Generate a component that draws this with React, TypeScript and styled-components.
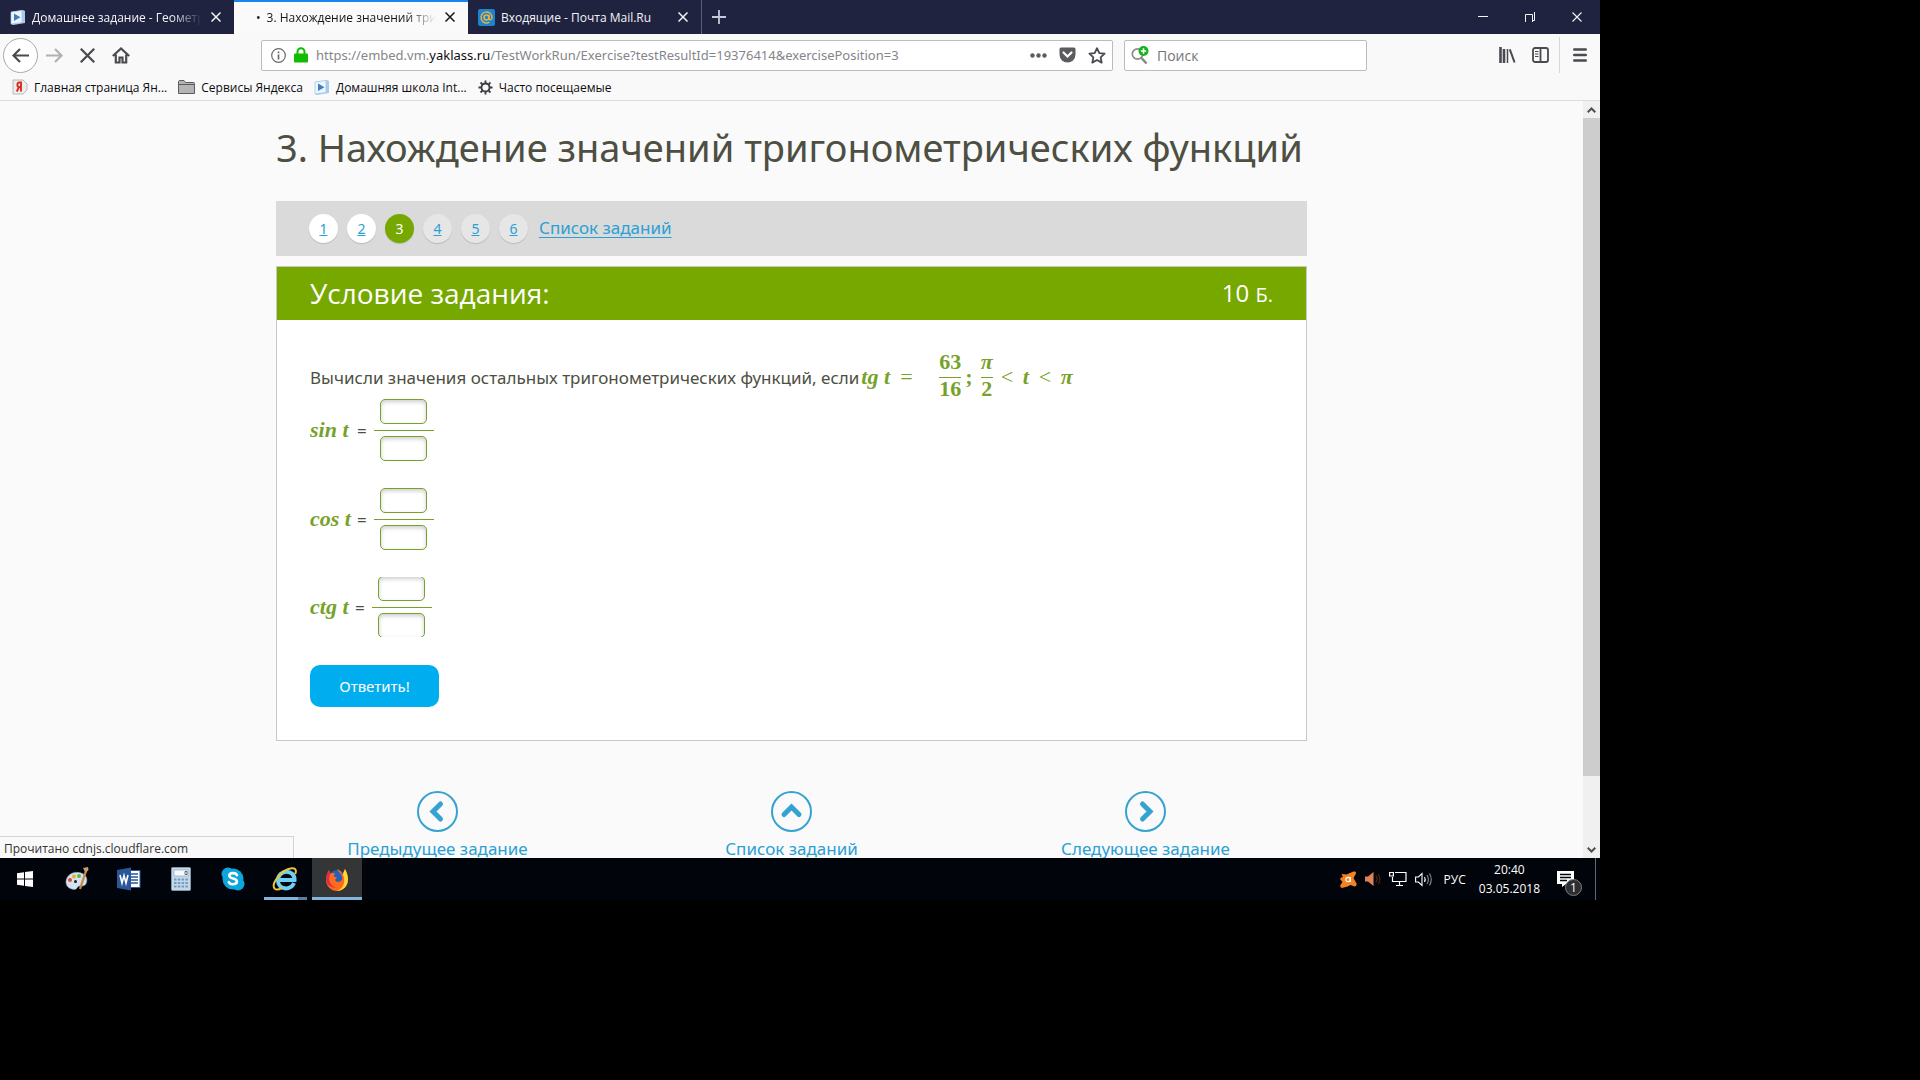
import React from "react";
import styled, { createGlobalStyle, css } from "styled-components";

const UI = `"Open Sans", "Noto Sans", sans-serif`;
const PAGE = `"Noto Sans", "Open Sans", sans-serif`;
const MATH = `"Liberation Serif", serif`;

const GlobalStyle = createGlobalStyle`
  * { box-sizing: border-box; }
  body { margin: 0; background: #000; font-family: ${UI}; }
  button { border: 0; padding: 0; background: none; color: inherit; font: inherit; cursor: pointer; }
  svg { display: block; flex: none; }
  h1, h2, p { margin: 0; font-weight: 400; }
`;

/* ---------- desktop ---------- */

const Desktop = styled.div`
  display: flex;
  flex-direction: column;
  width: calc(100% * 5 / 6);
  height: calc(100vh * 5 / 6);
  overflow: hidden;
`;

const BrowserWindow = styled.div`
  position: relative;
  display: flex;
  flex-direction: column;
  flex: 1;
  min-height: 0;
  background: #fafafa;
`;

/* ---------- tab strip ---------- */

const TabStrip = styled.div`
  display: flex;
  height: 34px;
  background: #20233f;
  color: #f4f4f8;
`;

const Tab = styled.div<{ $active?: boolean; $last?: boolean }>`
  display: flex;
  align-items: center;
  gap: 6px;
  width: 234px;
  padding: 0 10px;
  font-size: 12px;
  ${(p) =>
    p.$active &&
    css`
      background: #fafafa;
      color: #15151a;
      box-shadow: inset 0 2px #1784f0;
      padding-left: 22px;
    `}
  ${(p) => p.$last && "border-right: 1px solid #5d5f75;"}
`;

const TabTitle = styled.span<{ $fade?: boolean }>`
  flex: 1;
  overflow: hidden;
  white-space: nowrap;
  ${(p) => p.$fade && "mask-image: linear-gradient(to right, #000 82%, transparent 100%);"}
`;

const TabClose = styled.button`
  display: grid;
  place-items: center;
  width: 16px;
  height: 20px;
`;

const NewTab = styled.button`
  display: grid;
  place-items: center;
  width: 34px;
  color: #c8c9d6;
`;

const WindowControls = styled.div`
  display: flex;
  margin-left: auto;
`;

const WindowButton = styled.button`
  display: grid;
  place-items: center;
  width: 47px;
  height: 34px;
`;

/* ---------- toolbar ---------- */

const Toolbar = styled.div`
  display: flex;
  align-items: center;
  height: 42px;
  padding: 0 4px 0 3px;
  background: #f9f9fa;
  color: #4a4a4f;
`;

const ToolButton = styled.button<{ $round?: boolean; $dim?: boolean }>`
  display: grid;
  place-items: center;
  width: 33px;
  height: 36px;
  ${(p) =>
    p.$round &&
    css`
      width: 35px;
      height: 35px;
      border: 1px solid #a9a9ad;
      border-radius: 50%;
      background: #fff;
    `}
  ${(p) => p.$dim && "color: #b1b1b3;"}
`;

const Field = styled.div<{ $grow?: boolean }>`
  display: flex;
  align-items: center;
  gap: 8px;
  height: 31px;
  border: 1px solid #bcbcbf;
  border-radius: 2px;
  background: #fff;
  ${(p) =>
    p.$grow
      ? css`
          flex: 1;
          margin-left: 124px;
          padding: 0 6px 0 9px;
        `
      : css`
          width: 243px;
          margin: 0 124px 0 11px;
          padding: 0 6px;
        `}
`;

const Address = styled.div`
  flex: 1;
  overflow: hidden;
  white-space: nowrap;
  font-family: ${PAGE};
  font-size: 13px;
  color: #85858a;
  outline: none;
  b {
    font-weight: 400;
    color: #0c0c0d;
  }
`;

const FieldIcons = styled.div`
  display: flex;
  align-items: center;
  gap: 12px;
`;

const SearchInput = styled.input`
  flex: 1;
  min-width: 0;
  border: 0;
  padding: 0;
  outline: none;
  background: none;
  font: 14px ${UI};
  color: #333;
  &::placeholder {
    color: #757578;
    opacity: 1;
  }
`;

const MenuSlot = styled.div`
  display: flex;
  align-items: center;
  height: 36px;
  margin-left: 2px;
  padding-left: 3px;
  border-left: 1px solid #d7d7db;
`;

const Bookmarks = styled.nav`
  display: flex;
  align-items: center;
  gap: 11px;
  height: 25px;
  padding: 0 12px 2px;
  border-bottom: 1px solid #dcdcde;
  background: #f9f9fa;
`;

const Bookmark = styled.a`
  display: flex;
  align-items: center;
  gap: 6px;
  font-size: 12px;
  color: #0c0c0d;
  text-decoration: none;
  white-space: nowrap;
`;

/* ---------- page viewport ---------- */

const Viewport = styled.div`
  display: flex;
  flex: 1;
  min-height: 0;
`;

const PageArea = styled.main`
  flex: 1;
  min-width: 0;
  overflow: hidden;
  padding: 0 276px;
  font-family: ${PAGE};
`;

const Scrollbar = styled.div`
  display: flex;
  flex-direction: column;
  width: 17px;
  background: #f0f0f0;
  color: #505050;
`;

const ScrollArrow = styled.button`
  display: grid;
  place-items: center;
  height: 17px;
`;

const Track = styled.div`
  flex: 1;
`;

const Thumb = styled.div`
  height: 91%;
  background: #cdcdcd;
`;

const Title = styled.h1`
  padding: 20px 0 28px;
  font-size: 38px;
  line-height: 52px;
  color: #4d4f42;
  white-space: nowrap;
`;

const Steps = styled.nav`
  display: flex;
  align-items: center;
  gap: 9px;
  height: 55px;
  padding: 0 33px;
  background: #dadada;
`;

const Step = styled.a<{ $state: "done" | "current" | "next" }>`
  display: grid;
  place-items: center;
  width: 29px;
  height: 29px;
  border-radius: 50%;
  box-shadow: 0 1px 1px rgba(0, 0, 0, 0.15);
  font-size: 14px;
  color: ${(p) => (p.$state === "current" ? "#fff" : "#2ba0d4")};
  background: ${(p) => ({ done: "#fff", current: "#76a800", next: "#e6e6e6" })[p.$state]};
  text-decoration: ${(p) => (p.$state === "current" ? "none" : "underline")};
`;

const ListLink = styled.a`
  margin-left: 2px;
  font-size: 17px;
  line-height: 24px;
  padding-bottom: 2px;
  color: #2ba0d4;
  text-underline-offset: 3px;
`;

const Card = styled.section`
  margin-top: 10px;
  border: 1px solid #c8c8c8;
  background: #fff;
`;

const CardHeader = styled.header`
  display: flex;
  align-items: center;
  justify-content: space-between;
  height: 53px;
  padding: 0 33px 2px;
  background: #76a800;
  color: #fff;
  font-family: ${UI};
`;

const CardTitle = styled.h2`
  font-size: 28px;
`;

const Points = styled.span`
  font-size: 24px;
  small {
    font-size: 20px;
  }
`;

const CardBody = styled.form`
  padding: 35px 33px 33px;
  font-size: 17px;
  color: #4d4f42;
`;

const Question = styled.p`
  display: flex;
  align-items: center;
  height: 44px;
  white-space: nowrap;
`;

const MathText = styled.span<{ $upright?: boolean; $width?: number }>`
  min-width: ${(p) => p.$width ?? 0}px;
  font-family: ${MATH};
  font-size: 22px;
  line-height: 22px;
  font-weight: 700;
  font-style: ${(p) => (p.$upright ? "normal" : "italic")};
  color: #76a22a;
`;

const Relation = styled(MathText)`
  width: 14px;
  font-style: normal;
  font-weight: 400;
`;

const Formula = styled.span`
  display: flex;
  align-items: center;
  gap: 8px;
  margin-left: 2px;
`;

const Term = styled.span`
  display: flex;
  align-items: center;
  gap: 4px;
  margin-left: 17px;
`;

const Quotient = styled.span`
  display: flex;
  flex-direction: column;
  align-items: center;
  padding-bottom: 3px;
  & > :first-child {
    padding-bottom: 4px;
    border-bottom: 1px solid #76a22a;
  }
`;

const AnswerRow = styled.div<{ $clip?: boolean }>`
  display: flex;
  align-items: center;
  gap: 5px;
  height: ${(p) => (p.$clip ? 60 : 62)}px;
  margin-bottom: ${(p) => (p.$clip ? 28 : 27)}px;
  overflow: hidden;
`;

const AnswerFraction = styled.span`
  display: flex;
  flex: none;
  flex-direction: column;
  align-items: center;
  width: 60px;
  margin-left: 2px;
`;

const Bar = styled.span`
  width: 100%;
  height: 1px;
  margin: 6px 0 5px;
  background: #76a22a;
`;

const AnswerInput = styled.input`
  width: 47px;
  height: 25px;
  border: 1px solid #76a22a;
  border-radius: 5px;
  background: #fff;
  box-shadow: inset 0 2px 4px rgba(0, 0, 0, 0.2);
  text-align: center;
  outline: none;
`;

const Submit = styled.button`
  display: block;
  width: 129px;
  height: 42px;
  border-radius: 10px;
  background: #00aeef;
  color: #fff;
  font-size: 15px;
`;

const Pager = styled.nav`
  display: grid;
  grid-template-columns: repeat(3, 1fr);
  gap: 31px;
  margin-top: 50px;
`;

const PagerLink = styled.a`
  display: flex;
  flex-direction: column;
  align-items: center;
  gap: 5px;
  font-size: 17px;
  line-height: 24px;
  color: #2ba0d4;
  text-decoration: none;
  white-space: nowrap;
`;

const StatusPopup = styled.div`
  position: absolute;
  left: 0;
  bottom: 0;
  width: 294px;
  height: 22px;
  padding-left: 4px;
  border: 1px solid #d4d4d6;
  border-width: 1px 1px 0 0;
  background: #f9f9fa;
  font-size: 12px;
  line-height: 24px;
  color: #333;
`;

/* ---------- taskbar ---------- */

const Taskbar = styled.footer`
  display: flex;
  gap: 2px;
  height: 42px;
  background: #01040a;
  color: #fff;
`;

const TaskButton = styled.button<{ $open?: boolean; $active?: boolean }>`
  display: grid;
  place-items: center;
  width: 50px;
  padding: 2px 0 3px;
  ${(p) =>
    p.$open &&
    "background: linear-gradient(to right, #83b4de 78%, #5c80a0 78%) no-repeat 4px 100% / 43px 3px;"}
  ${(p) => p.$active && "background: #333537; box-shadow: inset 0 -3px #83b4de;"}
`;

const Tray = styled.div`
  display: flex;
  align-items: center;
  gap: 8px;
  margin-left: auto;
  padding-right: 4px;
  font-size: 12px;
`;

const Clock = styled.time`
  margin: 0 9px 0 5px;
  font-size: 12px;
  line-height: 19px;
  text-align: center;
`;

const Language = styled.span`
  margin-left: 4px;
`;

const ShowDesktop = styled.button`
  align-self: stretch;
  width: 1px;
  margin-left: 5px;
  background: #66686c;
`;

/* ---------- drawings ---------- */

const Cross = ({ size = 10, weight = 1.5 }: { size?: number; weight?: number }) => (
  <svg width={size} height={size} viewBox="0 0 10 10" fill="none" stroke="currentColor" strokeWidth={weight}>
    <path d="M.5.5l9 9M9.5.5l-9 9" />
  </svg>
);

const PlayBook = () => (
  <svg width="16" height="17" viewBox="0 0 16 17">
    <path d="M1 3l12-2 2 1v12l-12 2-2-1z" fill="#a9cbea" />
    <path d="M1 3l11-1.500v12L1 15z" fill="#eef6fd" stroke="#9cc4e8" strokeWidth=".7" />
    <path d="M4 4.500l6.500 3.800L4 12z" fill="#3f7fc0" />
  </svg>
);

const MailIcon = () => (
  <svg width="17" height="17" viewBox="0 0 17 17" fill="none" stroke="#e7b344">
    <rect width="17" height="17" rx="2" fill="#1b83cf" stroke="none" />
    <circle cx="8.500" cy="8.500" r="2.500" strokeWidth="1.600" />
    <path d="M11 5.800v3.500c0 2.300 3 1.800 3-.8a5.500 5.500 0 1 0-2.600 4.700" strokeWidth="1.400" />
  </svg>
);

const YandexIcon = () => (
  <svg width="16" height="16" viewBox="0 0 16 16">
    <path d="M1 1h10l4 4v6l-4 4H1z" fill="#ededed" stroke="#b9b9b9" />
    <path d="M9 12.500V3.500H7.300C5 3.500 4.600 7.800 7 8h2M7 8l-2.200 4.500" fill="none" stroke="#dc2a20" strokeWidth="1.900" />
  </svg>
);

const FolderIcon = () => (
  <svg width="17" height="14" viewBox="0 0 17 14" fill="#b4b4b4" stroke="#5c5c5c">
    <path d="M.5 13.500V2C.5 1 1 .5 2 .5h4L7.500 2.500h8q1 0 1 1v10z" />
    <path d="M1 4.500h15" />
  </svg>
);

const GearIcon = () => (
  <svg width="15" height="15" viewBox="0 0 16 16" fill="none" stroke="#3e3e42">
    <circle cx="8" cy="8" r="4.300" strokeWidth="2" />
    <path d="M8 .5v3M8 12.500v3M.5 8h3M12.500 8h3M2.700 2.700l2 2M11.300 11.300l2 2M2.700 13.300l2-2M11.300 4.700l2-2" strokeWidth="2" />
  </svg>
);

const ArrowIcon = ({ flip }: { flip?: boolean }) => (
  <svg width="17" height="15" viewBox="0 0 17 15" fill="none" stroke="currentColor" strokeWidth="2.200">
    <path d={flip ? "M0 7.500h15M9 1l6.500 6.500L9 14" : "M17 7.500H2M8 1L1.500 7.500 8 14"} />
  </svg>
);

const HomeIcon = () => (
  <svg width="18" height="17" viewBox="0 0 18 17" fill="none" stroke="currentColor" strokeWidth="2.200">
    <path d="M.8 9L9 1.500 17.200 9M3.800 7.500V15.500h3.700v-5h3v5h3.700V7.500" />
  </svg>
);

const InfoIcon = () => (
  <svg width="15" height="15" viewBox="0 0 15 15" fill="none" stroke="#6b6b6f">
    <circle cx="7.500" cy="7.500" r="6.800" strokeWidth="1.200" />
    <path d="M7.500 6.500v5M7.500 3.500v1.800" strokeWidth="1.700" />
  </svg>
);

const LockIcon = () => (
  <svg width="14" height="16" viewBox="0 0 14 16">
    <path d="M3.500 8V4.800a3.500 3.500 0 0 1 7 0V8" fill="none" stroke="#12bc00" strokeWidth="2" />
    <rect y="6.500" width="14" height="9" rx="1" fill="#12bc00" />
  </svg>
);

const DotsIcon = () => (
  <svg width="17" height="5" viewBox="0 0 17 5" fill="#5b5b60">
    <circle cx="2.500" cy="2.500" r="2.200" /><circle cx="8.500" cy="2.500" r="2.200" /><circle cx="14.500" cy="2.500" r="2.200" />
  </svg>
);

const PocketIcon = () => (
  <svg width="17" height="16" viewBox="0 0 17 16">
    <path d="M2 .5h13q1.500 0 1.500 1.500v5.500a8 8 0 0 1-16 0V2Q.5.5 2 .5z" fill="#5b5b60" />
    <path d="M4.500 5.500l4 4 4-4" fill="none" stroke="#fff" strokeWidth="2.200" strokeLinecap="round" />
  </svg>
);

const StarIcon = () => (
  <svg width="18" height="17" viewBox="0 0 18 17" fill="none" stroke="#4a4a4f" strokeWidth="1.800" strokeLinejoin="round">
    <path d="M9 1.200l2.300 4.900 5.300.6-4 3.600 1.100 5.300L9 13l-4.700 2.600 1.100-5.300-4-3.600 5.300-.6z" />
  </svg>
);

const SearchIcon = () => (
  <svg width="18" height="19" viewBox="0 0 18 19" fill="none">
    <circle cx="6.500" cy="8" r="5.200" stroke="#8a8a8e" strokeWidth="1.700" />
    <path d="M10.500 12l5 5.500" stroke="#8a8a8e" strokeWidth="2.600" />
    <circle cx="12.500" cy="5" r="5" fill="#17b01a" />
    <path d="M12.500 2.300v5.400M9.800 5h5.400" stroke="#fff" strokeWidth="1.600" />
  </svg>
);

const LibraryIcon = () => (
  <svg width="17" height="16" viewBox="0 0 17 16" stroke="currentColor" fill="none">
    <path d="M1.500 0v16M5 2v14" strokeWidth="2.600" />
    <path d="M8.500 2v14" strokeWidth="1.500" />
    <path d="M10.800 2.300l4.800 13.200" strokeWidth="2" />
  </svg>
);

const SidebarIcon = () => (
  <svg width="17" height="16" viewBox="0 0 17 16" stroke="currentColor" fill="none">
    <rect x="1" y="1" width="15" height="14" rx="2" strokeWidth="1.800" />
    <path d="M8.500 1v14" strokeWidth="1.800" />
    <path d="M3 4.500h3.500M3 7h3.500M3 9.500h3.500" strokeWidth="1.200" />
  </svg>
);

const MenuIcon = () => (
  <svg width="14" height="14" viewBox="0 0 14 14" stroke="currentColor" strokeWidth="2.400" strokeLinecap="round">
    <path d="M1.200 1.500h11.600M1.200 7h11.600M1.200 12.500h11.600" />
  </svg>
);

const ScrollChevron = ({ down }: { down?: boolean }) => (
  <svg width="9" height="6" viewBox="0 0 9 6" fill="none" stroke="currentColor" strokeWidth="2">
    <path d={down ? "M.7.7l3.800 3.800L8.300.7" : "M.7 5.300l3.800-3.800 3.800 3.800"} />
  </svg>
);

const turns = { left: 0, up: 90, right: 180 };

const PagerIcon = ({ to }: { to: keyof typeof turns }) => (
  <svg width="41" height="41" viewBox="0 0 41 41" fill="none" stroke="#35a3d2">
    <circle cx="20.500" cy="20.500" r="19.500" strokeWidth="2" />
    <path
      d="M23.500 13l-7.500 7.500 7.500 7.500"
      strokeWidth="5"
      strokeLinecap="round"
      transform={`rotate(${turns[to]} 20.500 20.500)`}
    />
  </svg>
);

const StartIcon = () => (
  <svg width="16" height="16" viewBox="0 0 16 16" fill="#fff">
    <path d="M0 2.300L7 1.300V7.500H0zM8 1.100L16 0v7.500H8zM0 8.500h7v6.200L0 13.700zM8 8.500h8V16L8 14.900z" />
  </svg>
);

const PaintIcon = () => (
  <svg width="24" height="24" viewBox="0 0 24 24">
    <path d="M1 14C2 8 8 4.500 14 5.500s9 5 7.500 10c-1 4-5 3.500-7 3.500-2.500 0-2 3.500-5 3.500C4 22 .5 19 1 14z" fill="#d3e3f0" stroke="#8ca5b8" strokeWidth=".6" />
    <circle cx="5" cy="13" r="2" fill="#d94b35" /><circle cx="9" cy="9.500" r="2" fill="#e8ad35" />
    <circle cx="14" cy="9" r="2" fill="#65b544" /><circle cx="10.500" cy="14.500" r="1.500" fill="#18202a" />
    <path d="M21 4L15 22" stroke="#c98842" strokeWidth="2.300" /><path d="M18 1l5-1 .5 3-3 3z" fill="#c99d72" />
  </svg>
);

const WordIcon = () => (
  <svg width="24" height="24" viewBox="0 0 24 24">
    <rect x="12" y="3.500" width="11" height="17" fill="#fff" stroke="#2b579a" />
    <path d="M14 7h7M14 10h7M14 13h7M14 16h7" stroke="#2b579a" strokeWidth="1.500" />
    <path d="M0 3L14 .5v23L0 21z" fill="#2b579a" />
    <path d="M3 8l2 8 2-7.500L9 16l2-8" fill="none" stroke="#fff" strokeWidth="1.600" />
  </svg>
);

const CalcIcon = () => (
  <svg width="20" height="24" viewBox="0 0 20 24">
    <rect x=".5" y=".5" width="19" height="23" rx="1" fill="#c5d8e8" stroke="#8096aa" />
    <rect x="3" y="3" width="14" height="6" fill="#f4f9fd" stroke="#849db4" strokeWidth=".6" />
    <path d="M3 12.500h14M3 16h14M3 19.500h14" stroke="#6f9cc2" strokeWidth="2" strokeDasharray="2.500 1.300" />
    <path d="M14 4.500h2v3h-2z" fill="none" stroke="#333" strokeWidth=".7" />
  </svg>
);

const SkypeIcon = () => (
  <svg width="24" height="24" viewBox="0 0 24 24">
    <circle cx="12" cy="12" r="10.500" fill="#0ea5dc" />
    <circle cx="7" cy="7" r="6.500" fill="#0ea5dc" /><circle cx="17" cy="17" r="6.500" fill="#0ea5dc" />
    <path d="M16 8.200C15 5.500 8.500 5.300 8.300 8.600c-.2 3.600 7.800 2.400 7.600 6-.2 3.500-7 3.500-8.100.5" fill="none" stroke="#fff" strokeWidth="2.600" strokeLinecap="round" />
  </svg>
);

const ExplorerIcon = () => (
  <svg width="26" height="24" viewBox="0 0 26 24" fill="none">
    <path d="M7 13h15.500c.5-11-16.500-11-16.500.5 0 9.500 13 10.500 16 2.500" stroke="#6fd0f5" strokeWidth="4" />
    <path d="M3 22C-2 17 10 2 20 1.300c5-.3 4 4 3.200 5.700M3 22c2 1.300 5 0 7-1.200" stroke="#edc53c" strokeWidth="2" />
  </svg>
);

const FirefoxIcon = () => (
  <svg width="24" height="24" viewBox="0 0 24 24">
    <circle cx="12" cy="12" r="9" fill="#2461b5" />
    <path d="M12 2c3 1 5 3 5 6l3-6c1 2 3 6 3 10.500C23 19 18 24 12 24S1 19 1 13C1 8 3 5 4 3l1 4c2-1.500 4-1 5 0L8.500 9.500l3.500 1-2 2.500c2 3 5 2 7 0 1-3-1-6-3-8z" fill="#ff6a1c" />
    <path d="M20 2c1.500 3 3 6 3 10.500C23 19 18 24 12 24c5-2.500 8-6 7-13-.3-2-1-2.500-1-4z" fill="#ffd736" />
    <path d="M4 3l1 4c-2 6 0 12 6 14-6-.5-10-4-10-9 0-4 2-6 3-9z" fill="#e22b45" />
  </svg>
);

const AvastIcon = () => (
  <svg width="17" height="17" viewBox="0 0 17 17">
    <path d="M1.500 3l5 .4L13.500.6q3-.5 2.500 2l-2.500 4.400 3 5.500q.5 3-2 3l-4-1.500-3 1.500L2 17q-2.500-.5-1.500-3l2-3L.3 8.500Q-.5 6.500 3 6z" fill="#f5821f" />
    <circle cx="8" cy="8.500" r="2.200" fill="none" stroke="#fff" strokeWidth="1.200" />
    <path d="M10.400 6v5" stroke="#fff" strokeWidth="1.200" />
  </svg>
);

const HornIcon = () => (
  <svg width="16" height="16" viewBox="0 0 16 16">
    <path d="M0 5.500h3L8.500 1v14L3 10.500H0z" fill="#e28159" />
    <path d="M11 4.500q2.500 3.500 0 7M13.500 3q3 5 0 10" fill="none" stroke="#5a2b16" />
  </svg>
);

const NetworkIcon = () => (
  <svg width="18" height="16" viewBox="0 0 18 16" fill="none" stroke="#fff" strokeWidth="1.200">
    <path d="M6 1.500h11v9H3.500V6M10.500 10.500v4M7 14.500h7" />
    <path d="M.6 1.500h3.800v3.500H.6z" />
  </svg>
);

const VolumeIcon = () => (
  <svg width="17" height="15" viewBox="0 0 17 15" fill="none" stroke="#fff" strokeWidth="1.100">
    <path d="M.6 5h2.800L7 1.500v12L3.400 10H.6zM9.500 5q1.500 2.500 0 5" />
    <path d="M12 3q2.800 4.500 0 9M14.500 1.500q3.500 6 0 12" stroke="#898c90" />
  </svg>
);

const Notice = styled.button`
  position: relative;
  width: 25px;
  height: 26px;
`;

const NoticeCount = styled.span`
  position: absolute;
  right: 0;
  bottom: -4px;
  width: 17px;
  height: 17px;
  border: 1px solid #7b7d80;
  border-radius: 50%;
  background: #2c2e32;
  font-size: 12px;
  line-height: 15px;
  text-align: center;
`;

/* ---------- content ---------- */

const steps = [1, 2, 3, 4, 5, 6];
const stepState = (n: number) => (n < 3 ? "done" : n === 3 ? "current" : "next");

const answers = [
  { name: "sin t", width: 42, clip: false },
  { name: "cos t", width: 42, clip: false },
  { name: "ctg t", width: 40, clip: true },
];

const bookmarks = [
  { text: "Главная страница Ян...", icon: <YandexIcon /> },
  { text: "Сервисы Яндекса", icon: <FolderIcon /> },
  { text: "Домашняя школа Int...", icon: <PlayBook /> },
  { text: "Часто посещаемые", icon: <GearIcon /> },
];

const pager = [
  { text: "Предыдущее задание", to: "left" },
  { text: "Список заданий", to: "up" },
  { text: "Следующее задание", to: "right" },
] as const;

const Chrome = () => (
  <>
    <TabStrip>
      <Tab>
        <PlayBook />
        <TabTitle $fade>Домашнее задание - Геометр</TabTitle>
        <TabClose aria-label="Закрыть вкладку"><Cross /></TabClose>
      </Tab>
      <Tab $active>
        <span>•</span>
        <TabTitle $fade>3. Нахождение значений триг</TabTitle>
        <TabClose aria-label="Закрыть вкладку"><Cross /></TabClose>
      </Tab>
      <Tab $last>
        <MailIcon />
        <TabTitle>Входящие - Почта Mail.Ru</TabTitle>
        <TabClose aria-label="Закрыть вкладку"><Cross /></TabClose>
      </Tab>
      <NewTab aria-label="Новая вкладка">
        <svg width="14" height="14" viewBox="0 0 14 14" stroke="currentColor" strokeWidth="1.800">
          <path d="M7 0v14M0 7h14" />
        </svg>
      </NewTab>
      <WindowControls>
        <WindowButton aria-label="Свернуть">
          <svg width="10" height="10" viewBox="0 0 10 10" stroke="currentColor"><path d="M0 4.500h10" /></svg>
        </WindowButton>
        <WindowButton aria-label="Восстановить">
          <svg width="10" height="10" viewBox="0 0 10 10" stroke="currentColor" fill="none">
            <path d="M.5 10V2.500h7V10M7.500 8.500h2V0" />
          </svg>
        </WindowButton>
        <WindowButton aria-label="Закрыть"><Cross weight={1.1} /></WindowButton>
      </WindowControls>
    </TabStrip>
    <Toolbar>
      <ToolButton $round aria-label="Назад"><ArrowIcon /></ToolButton>
      <ToolButton $dim aria-label="Вперёд"><ArrowIcon flip /></ToolButton>
      <ToolButton aria-label="Остановить"><Cross size={15} weight={1.5} /></ToolButton>
      <ToolButton aria-label="Домой"><HomeIcon /></ToolButton>
      <Field $grow>
        <InfoIcon />
        <LockIcon />
        <Address role="textbox" aria-label="Адрес" contentEditable suppressContentEditableWarning spellCheck={false}>
          https://embed.vm.<b>yaklass.ru</b>/TestWorkRun/Exercise?testResultId=19376414&amp;exercisePosition=3
        </Address>
        <FieldIcons><DotsIcon /><PocketIcon /><StarIcon /></FieldIcons>
      </Field>
      <Field>
        <SearchIcon />
        <SearchInput aria-label="Поиск" placeholder="Поиск" />
      </Field>
      <ToolButton aria-label="Библиотека"><LibraryIcon /></ToolButton>
      <ToolButton aria-label="Боковая панель"><SidebarIcon /></ToolButton>
      <MenuSlot><ToolButton aria-label="Меню"><MenuIcon /></ToolButton></MenuSlot>
    </Toolbar>
    <Bookmarks>
      {bookmarks.map((b) => (
        <Bookmark key={b.text} href="#">{b.icon}{b.text}</Bookmark>
      ))}
    </Bookmarks>
  </>
);

const Task = () => (
  <Card>
    <CardHeader>
      <CardTitle>Условие задания:</CardTitle>
      <Points>10 <small>Б.</small></Points>
    </CardHeader>
    <CardBody onSubmit={(e) => e.preventDefault()}>
      <Question>
        Вычисли значения остальных тригонометрических функций, если
        <Formula>
          <MathText $width={31}>tg t</MathText>
          <Relation>=</Relation>
          <Term>
            <Quotient>
              <MathText $upright>63</MathText>
              <MathText $upright>16</MathText>
            </Quotient>
            <MathText $upright>;</MathText>
          </Term>
          <Quotient>
            <MathText>π</MathText>
            <MathText $upright>2</MathText>
          </Quotient>
          <Relation>&lt;</Relation>
          <MathText $width={8}>t</MathText>
          <Relation>&lt;</Relation>
          <MathText>π</MathText>
        </Formula>
      </Question>
      {answers.map((a) => (
        <AnswerRow key={a.name} $clip={a.clip}>
          <MathText $width={a.width}>{a.name}</MathText>
          <span>=</span>
          <AnswerFraction>
            <AnswerInput aria-label={`${a.name}, числитель`} />
            <Bar />
            <AnswerInput aria-label={`${a.name}, знаменатель`} />
          </AnswerFraction>
        </AnswerRow>
      ))}
      <Submit type="submit">Ответить!</Submit>
    </CardBody>
  </Card>
);

export default function App() {
  return (
    <>
      <GlobalStyle />
      <Desktop>
        <BrowserWindow>
          <Chrome />
          <Viewport>
            <PageArea>
              <Title>3. Нахождение значений тригонометрических функций</Title>
              <Steps>
                {steps.map((n) => (
                  <Step key={n} href="#" $state={stepState(n)}>{n}</Step>
                ))}
                <ListLink href="#">Список заданий</ListLink>
              </Steps>
              <Task />
              <Pager>
                {pager.map((p) => (
                  <PagerLink key={p.to} href="#"><PagerIcon to={p.to} />{p.text}</PagerLink>
                ))}
              </Pager>
            </PageArea>
            <Scrollbar>
              <ScrollArrow aria-label="Вверх"><ScrollChevron /></ScrollArrow>
              <Track><Thumb /></Track>
              <ScrollArrow aria-label="Вниз"><ScrollChevron down /></ScrollArrow>
            </Scrollbar>
          </Viewport>
          <StatusPopup>Прочитано cdnjs.cloudflare.com</StatusPopup>
        </BrowserWindow>
        <Taskbar>
          <TaskButton aria-label="Пуск"><StartIcon /></TaskButton>
          <TaskButton aria-label="Paint"><PaintIcon /></TaskButton>
          <TaskButton aria-label="Word"><WordIcon /></TaskButton>
          <TaskButton aria-label="Калькулятор"><CalcIcon /></TaskButton>
          <TaskButton aria-label="Skype"><SkypeIcon /></TaskButton>
          <TaskButton aria-label="Internet Explorer" $open><ExplorerIcon /></TaskButton>
          <TaskButton aria-label="Firefox" $active><FirefoxIcon /></TaskButton>
          <Tray>
            <AvastIcon />
            <HornIcon />
            <NetworkIcon />
            <VolumeIcon />
            <Language>РУС</Language>
            <Clock>20:40<br />03.05.2018</Clock>
            <Notice aria-label="Уведомления">
              <svg width="18" height="18" viewBox="0 0 18 18">
                <path d="M0 1h17v13H9l-4 3v-3H0z" fill="#fff" />
                <path d="M3 4.500h11M3 7.500h11M3 10.500h7" stroke="#01040a" strokeWidth="1.300" />
              </svg>
              <NoticeCount>1</NoticeCount>
            </Notice>
            <ShowDesktop aria-label="Показать рабочий стол" />
          </Tray>
        </Taskbar>
      </Desktop>
    </>
  );
}
